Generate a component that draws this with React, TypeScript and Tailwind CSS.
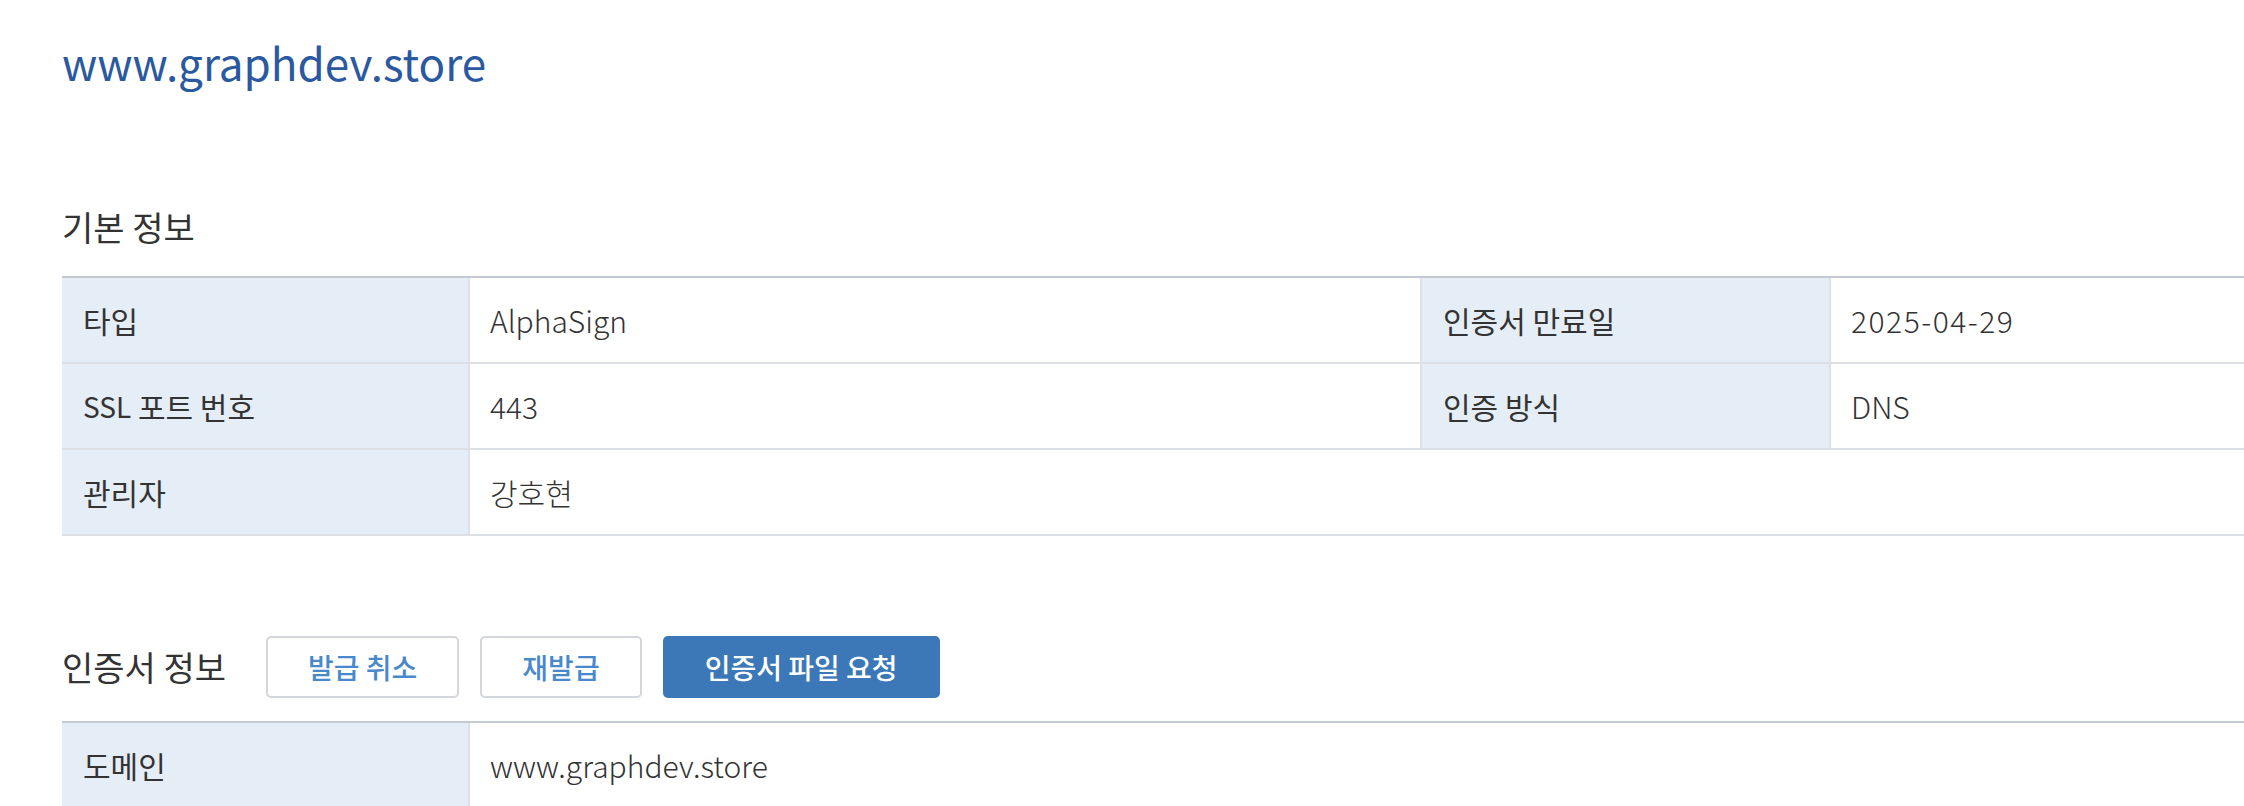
import type { ReactNode } from 'react'

const font = { fontFamily: '"Noto Sans CJK KR", "Noto Sans", sans-serif' }

function Label({ children, border = false }: { children: ReactNode; border?: boolean }) {
  return (
    <div
      className={`flex items-center bg-[#e5edf6] pl-[21px] text-[30px] text-[#333333] ${
        border ? 'border-l-2 border-[#dae1e9]' : ''
      }`}
    >
      {children}
    </div>
  )
}

function Value({ children, span = false }: { children: ReactNode; span?: boolean }) {
  return (
    <div
      className={`flex items-center border-l-2 border-[#dae1e9] pl-[20px] text-[30px] font-light text-[#333333] ${
        span ? 'col-span-3' : ''
      }`}
    >
      {children}
    </div>
  )
}

function Row({ children }: { children: ReactNode }) {
  return (
    <div className="grid h-[86px] grid-cols-[406px_952px_409px_953px] border-b-2 border-[#dde1e6]">
      {children}
    </div>
  )
}

export default function App() {
  return (
    <div className="h-[806px] w-[2244px] overflow-hidden bg-white" style={font}>
      <div className="pl-[62px] pt-[30px]">
        <h1 className="text-[44px] leading-[64px] text-[#2b59a0]">www.graphdev.store</h1>

        <h2 className="mt-[111px] text-[34px] leading-[44px] text-[#333333]">기본 정보</h2>
        <div className="mt-[27px] w-[2720px] border-t-2 border-[#c4cad4]">
          <Row>
            <Label>타입</Label>
            <Value>AlphaSign</Value>
            <Label border>인증서 만료일</Label>
            <Value>
              <span className="tracking-[1.5px]">2025-04-29</span>
            </Value>
          </Row>
          <Row>
            <Label>
              <span className="text-[28px]">SSL</span>&nbsp;포트 번호
            </Label>
            <Value>443</Value>
            <Label border>인증 방식</Label>
            <Value>DNS</Value>
          </Row>
          <Row>
            <Label>관리자</Label>
            <Value span>강호현</Value>
          </Row>
        </div>

        <div className="mt-[100px] flex h-[62px] items-center">
          <h2 className="mr-[40px] text-[34px] leading-[44px] text-[#333333]">인증서 정보</h2>
          <button className="h-[62px] rounded-[5px] border-2 border-[#d3d6db] bg-white px-[40px] text-[28px] font-medium text-[#4a88cc]">
            발급 취소
          </button>
          <button className="ml-[21px] h-[62px] rounded-[5px] border-2 border-[#d3d6db] bg-white px-[40px] text-[28px] font-medium text-[#4a88cc]">
            재발급
          </button>
          <button className="ml-[21px] h-[62px] rounded-[5px] bg-[#3c78b8] px-[42px] text-[28px] font-medium text-white">
            인증서 파일 요청
          </button>
        </div>

        <div className="mt-[23px] w-[2720px] border-t-2 border-[#c4cad4]">
          <Row>
            <Label>도메인</Label>
            <Value span>www.graphdev.store</Value>
          </Row>
        </div>
      </div>
    </div>
  )
}
